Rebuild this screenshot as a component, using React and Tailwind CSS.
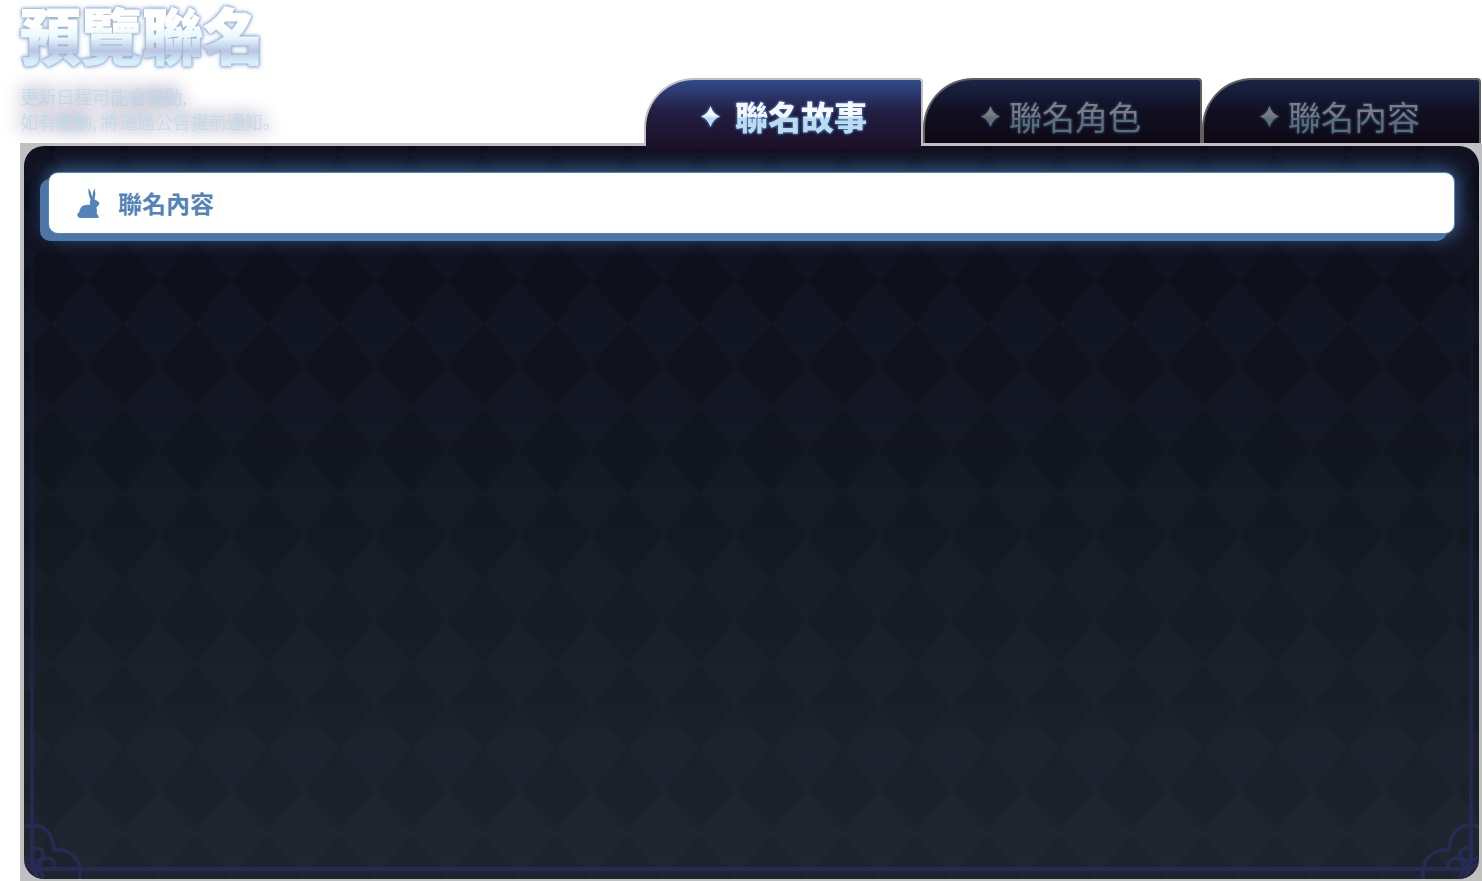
import { useState } from 'react'

const TABS = [
  { id: 'story', label: '聯名故事' },
  { id: 'characters', label: '聯名角色' },
  { id: 'content', label: '聯名內容' },
]

const Sparkle = () => (
  <svg className="h-6 w-5 shrink-0" viewBox="0 0 20 24" aria-hidden="true">
    <defs>
      <linearGradient id="sparkle" x1="0" y1="0" x2="0" y2="1">
        <stop offset="40%" stopColor="#f5f9ff" />
        <stop offset="60%" stopColor="#badcef" />
      </linearGradient>
    </defs>
    <path d="M10.500 2 Q13 10 20 12.500 Q13 15 10.500 23 Q8 15 1 12.500 Q8 10 10.500 2Z" fill="url(#sparkle)" />
  </svg>
)

const Rabbit = () => (
  <svg className="h-[30px] w-[23px] shrink-0 fill-[#5383b8]" viewBox="51 38 69 92" aria-hidden="true">
    <path d="M86 38 Q94 50 97 66 Q99 48 104 39 Q109 55 104 73 Q115 76 119 84 Q119 92 110 97 Q112 107 111 116 Q117 124 117 130 H62 Q52 129 51 119 Q53 113 57 112 Q59 96 72 91 Q81 88 90 90 Q88 80 92 73 Q83 56 86 38Z" />
  </svg>
)

const Corner = ({ className }) => (
  <svg className={`absolute bottom-0 h-[59px] w-[60px] ${className}`} viewBox="0 0 60 59" fill="none" stroke="#272b54" strokeWidth="3.5" aria-hidden="true">
    <path d="M0 7 Q4 5 8 5 C21 5 30 15 30 30 C45 28 56 39 56 51 V59" />
    <path d="M8 30 C12 26 20 29 19 35 C18 41 9 44 0 37" />
    <path d="M29 50 C33 44 29 38 23 38 C16 38 13 49 20 58" />
    <path d="M0 44 Q6 49 14 45 M14 43 L18 38 M11 46 Q10 52 14 58" strokeWidth="4.5" />
  </svg>
)

// Diamond wallpaper that fills the panel
const Diamonds = () => (
  <svg className="absolute inset-0 size-full" aria-hidden="true">
    <defs>
      <pattern id="diamonds" width="72" height="85" x="27" y="135" patternUnits="userSpaceOnUse">
        <path d="M36 0 L72 42.5 L36 85 L0 42.5Z" fill="#7078b0" fillOpacity="0.035" />
      </pattern>
    </defs>
    <rect width="100%" height="100%" fill="url(#diamonds)" />
  </svg>
)

function App() {
  const [activeTab, setActiveTab] = useState('story')

  return (
    <div className="flex min-h-screen flex-col bg-white pl-5 font-['Noto_Sans_CJK_TC',sans-serif]">

      {/* Header */}
      <header className="flex items-end justify-between pr-px">
        <div className="pb-[9px]">
          <h1 className="[filter:drop-shadow(0_0_1px_#8fadd0)_drop-shadow(0_0_1px_#9db8d8)_drop-shadow(0_0_2px_#b4c8e2)]">
            <span className="block bg-[linear-gradient(to_bottom,#fff_37%,#e6f7fb_56%,#b9c5e3_75%,#d8eff9_91%)] bg-clip-text text-[61px] leading-[68px] font-black text-transparent [-webkit-text-stroke:1px_transparent]">
              預覽聯名
            </span>
          </h1>
          <p className="mt-4 font-['Noto_Sans_CJK_JP',sans-serif] text-[18px] leading-[25px] font-light text-[#b9dded] [text-shadow:0_0_18px_#29245a]">
            更新日程可能會變動,<br />
            如有變動, 將透過公告提前通知。
          </p>
        </div>

        <nav className="flex items-end">
          {TABS.map(tab => {
            const active = activeTab === tab.id
            return (
              <button
                key={tab.id}
                onClick={() => setActiveTab(tab.id)}
                className={`flex h-[65px] w-[279px] items-center justify-center rounded-tl-[50px] rounded-tr-[4px] border-2 border-b-0 border-[#c0c0c0] bg-linear-to-b from-[#304b8d] via-[#221f44] via-50% to-[#1c1128] pt-[9px] text-[33px] leading-[48px] ${
                  active
                    ? 'relative z-10 gap-[15px] font-black after:absolute after:inset-x-0 after:-bottom-[6px] after:h-[6px] after:bg-[#1c1128]'
                    : 'gap-[9px] pr-1 font-normal brightness-50'
                }`}
              >
                <span className="[filter:drop-shadow(0_0_1px_#426bae)_drop-shadow(0_0_1px_#426bae)]">
                  <Sparkle />
                </span>
                <span className="[filter:drop-shadow(0_0_1px_#426bae)_drop-shadow(0_0_1px_#426bae)]">
                  <span className="block bg-linear-to-b from-[#f5f9ff] from-50% to-[#badcef] to-55% bg-clip-text text-transparent">
                    {tab.label}
                  </span>
                </span>
              </button>
            )
          })}
        </nav>
      </header>

      {/* Panel */}
      <main className="flex flex-1 flex-col bg-[#c0c0c0] pt-[3px] pr-[3px] pb-[2px] pl-1">
        <section className="relative flex-1 overflow-hidden rounded-[20px] bg-linear-to-b from-[#0c0d1b] via-[#12161f] via-45% to-[#1e242d] px-6 pt-[26px]">
          <Diamonds />
          <div className="absolute inset-x-[6px] top-0 bottom-2 border-x-4 border-b-4 [border-image:linear-gradient(to_bottom,#11132500,#15193299_40%,#272b54)_4]" />
          <Corner className="left-0" />
          <Corner className="right-0 -scale-x-100" />

          <div className="relative flex h-[62px] items-center gap-[18px] rounded-[10px] border border-[#5383b8] bg-white pl-7 shadow-[-8px_7px_0_0_#4b76a7,0_0_20px_2px_#416c9c]">
            <Rabbit />
            <h2 className="text-2xl leading-8 font-bold text-[#5383b8]">聯名內容</h2>
          </div>
        </section>
      </main>
    </div>
  )
}

export default App
